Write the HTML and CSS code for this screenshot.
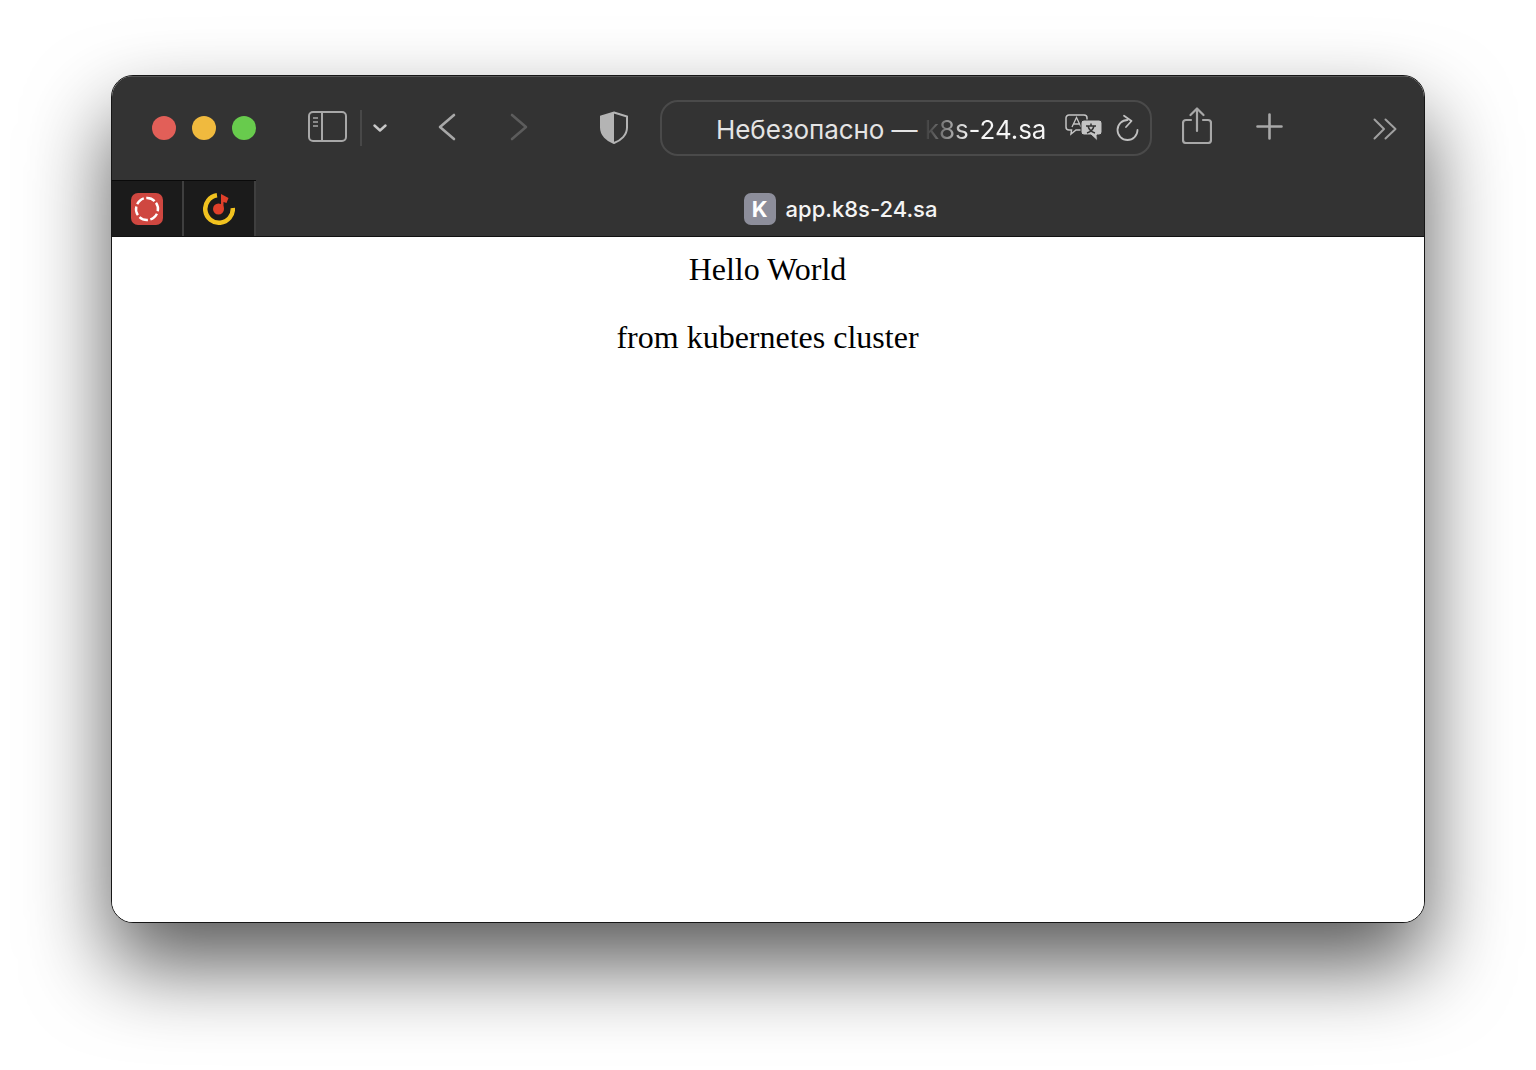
FILE: index.html
```html
<!DOCTYPE html>
<html lang="ru">
<head>
    <meta charset="UTF-8">
    <title>app.k8s-24.sa</title>
    <link rel="stylesheet" href="styles.css">
</head>
<body>
    <div class="window">
        <header class="toolbar">
            <div class="lights">
                <span class="light red"></span>
                <span class="light yellow"></span>
                <span class="light green"></span>
            </div>
            <svg class="ico sidebar" width="39" height="31" viewBox="0 0 39 31" fill="none" stroke="#a8a8a8" stroke-width="2">
                <rect x="1" y="1" width="37" height="29" rx="4"/>
                <path d="M14 1v29"/>
                <path d="M5 7h5M5 11h5M5 15h5" stroke-width="1.6"/>
            </svg>
            <span class="divider"></span>
            <svg class="ico chevron" width="14" height="8" viewBox="0 0 14 8" fill="none" stroke="#c8c8c8" stroke-width="2.4" stroke-linecap="round" stroke-linejoin="round">
                <path d="M1.5 1.5 7 6.5l5.500-5"/>
            </svg>
            <svg class="ico back" width="18" height="28" viewBox="0 0 18 28" fill="none" stroke="#a8a8a8" stroke-width="2.600" stroke-linecap="round" stroke-linejoin="round">
                <path d="M16 2 2 14l14 12"/>
            </svg>
            <svg class="ico forward" width="18" height="28" viewBox="0 0 18 28" fill="none" stroke="#5c5c5c" stroke-width="2.600" stroke-linecap="round" stroke-linejoin="round">
                <path d="M2 2l14 12L2 26"/>
            </svg>
            <svg class="ico shield" width="28" height="33" viewBox="0 0 28 33">
                <path d="M14 1.500 27 5.500v11C27 24 21 29.500 14 32 7 29.500 1 24 1 16.500v-11z" fill="none" stroke="#b4b4b4" stroke-width="2"/>
                <path d="M14 1.500 1 5.500v11C1 24 7 29.500 14 32z" fill="#b4b4b4"/>
            </svg>
            <div class="address">
                <span class="address-text">Небезопасно — <span class="host">k8s-24.sa</span></span>
                <svg class="ico translate" width="37" height="28" viewBox="0 0 37 28">
                    <path d="M4 1h15a3 3 0 0 1 3 3v9a3 3 0 0 1-3 3H11l-5 4 .5-4H4a3 3 0 0 1-3-3V4a3 3 0 0 1 3-3z" fill="none" stroke="#c4c4c4" stroke-width="1.500"/>
                    <path d="M7 13 11.500 3.500 16 13M8.500 10h6" fill="none" stroke="#c4c4c4" stroke-width="1.300"/>
                    <path d="M19 6h15a3 3 0 0 1 3 3v9a3 3 0 0 1-3 3h-2l.5 6-6.500-6h-7a3 3 0 0 1-3-3V9a3 3 0 0 1 3-3z" fill="#c4c4c4" stroke="#333" stroke-width="1"/>
                    <path d="M21 12h10M26 9.500V12M23 12c1 4 4 6 7 7M29 12c-1 4-4 6-7 7" fill="none" stroke="#333" stroke-width="1.500"/>
                </svg>
                <svg class="ico reload" width="23" height="28" viewBox="0 0 23 28" fill="none" stroke="#c0c0c0" stroke-width="1.800" stroke-linecap="round" stroke-linejoin="round">
                    <path d="M11.500 6A10 10 0 1 0 21.500 16"/>
                    <path d="M8 1.700l7.500 5.300L10 13"/>
                </svg>
            </div>
            <svg class="ico share" width="30" height="37" viewBox="0 0 30 37" fill="none" stroke="#a8a8a8" stroke-width="2.200" stroke-linecap="round" stroke-linejoin="round">
                <path d="M9 13H4a3 3 0 0 0-3 3v17a3 3 0 0 0 3 3h22a3 3 0 0 0 3-3V16a3 3 0 0 0-3-3h-5"/>
                <path d="M15 24V2M8.500 8 15 1.500 21.500 8"/>
            </svg>
            <svg class="ico plus" width="27" height="27" viewBox="0 0 27 27" fill="none" stroke="#a8a8a8" stroke-width="2.600" stroke-linecap="round">
                <path d="M13.500 1.500v24M1.500 13.500h24"/>
            </svg>
            <svg class="ico more" width="24" height="22" viewBox="0 0 24 22" fill="none" stroke="#a0a0a0" stroke-width="2" stroke-linecap="round" stroke-linejoin="round">
                <path d="M1.500 1.500 11 11l-9.500 9.500M12.500 1.500 22.500 11l-10 9.500"/>
            </svg>
        </header>
        <nav class="tabbar">
            <div class="pinned">
                <div class="pin">
                    <svg width="32" height="32" viewBox="0 0 32 32">
                        <rect width="32" height="32" rx="7" fill="#cf4740"/>
                        <circle cx="16" cy="16" r="11" fill="none" stroke="#fff" stroke-width="2.400" stroke-dasharray="9 2.500" transform="rotate(-35 16 16)"/>
                    </svg>
                </div>
                <div class="pin">
                    <svg width="32" height="32" viewBox="0 0 32 32">
                        <path d="M14 2.300A13.800 13.800 0 1 0 29.800 15" fill="none" stroke="#f1c21f" stroke-width="4.500"/>
                        <circle cx="15.500" cy="16" r="5.500" fill="#e0402a"/>
                        <path d="M18 16V1l7.500 4-2 5-3-1v7z" fill="#e0402a"/>
                    </svg>
                </div>
            </div>
            <div class="tab-title">
                <span class="favicon">K</span>
                <span>app.k8s-24.sa</span>
            </div>
        </nav>
        <main class="page">
            <p>Hello World</p>
            <p>from kubernetes cluster</p>
        </main>
    </div>
</body>
</html>
```

FILE: styles.css
```css
*{
    margin: 0;
    padding: 0;
    box-sizing: border-box;
}
body{
    width: 1536px;
    height: 1070px;
    padding: 75px 111px 147px;
    background-color: white;
    overflow: hidden;
    font-family: Inter, "Noto Sans", sans-serif;
}
.window{
    height: 848px;
    display: flex;
    flex-direction: column;
    border: 1px solid #161616;
    border-radius: 22px;
    overflow: hidden;
    background: white;
    box-shadow: 0 42px 84px rgba(0, 0, 0, .65);
}
.toolbar{
    height: 104px;
    display: flex;
    align-items: flex-start;
    background: #333333;
    border-top: 1px solid #555;
}
.ico{
    flex: none;
    display: block;
}
.lights{
    display: flex;
    gap: 16px;
    margin: 39px 0 0 40px;
}
.light{
    width: 24px;
    height: 24px;
    border-radius: 50%;
}
.red{ background: #e25f58; }
.yellow{ background: #f0ba3e; }
.green{ background: #68cb4d; }
.sidebar{ margin: 34px 0 0 52px; }
.divider{
    width: 2px;
    height: 36px;
    margin: 33px 0 0 13px;
    background: #484848;
}
.chevron{ margin: 47px 0 0 11px; }
.back{ margin: 36px 0 0 51px; }
.forward{ margin: 36px 0 0 54px; }
.shield{ margin: 34px 0 0 72px; }
.address{
    width: 492px;
    height: 56px;
    margin: 23px 0 0 32px;
    padding-left: 54px;
    display: flex;
    align-items: center;
    border: 2px solid #4a4a4a;
    border-radius: 18px;
    color: #e4e4e4;
    font-size: 26px;
}
.address-text{
    width: 349px;
    padding-top: 3px;
    letter-spacing: -.08px;
    white-space: nowrap;
}
.host{
    color: transparent;
    background: linear-gradient(90deg, #3d3d3d 0, #8a8a8a 22px, #f6f6f6 44px);
    -webkit-background-clip: text;
    background-clip: text;
}
.reload{ margin-left: 14px; }
.share{ margin: 30px 0 0 30px; }
.plus{ margin: 36px 0 0 44px; }
.more{ margin: 41px 0 0 90px; }
.tabbar{
    height: 57px;
    display: flex;
    background: #333333;
    border-bottom: 1px solid #111;
}
.pinned{
    display: flex;
    border-top: 1px solid #0a0a0a;
}
.pin{
    width: 72px;
    display: flex;
    align-items: center;
    justify-content: center;
    background: #1b1b1b;
    border-right: 2px solid #3f3f3f;
}
.tab-title{
    flex: 1;
    padding: 1px 0 0 1px;
    display: flex;
    align-items: center;
    justify-content: center;
    gap: 10px;
    color: #f4f4f4;
    font-size: 22px;
    font-weight: 500;
}
.favicon{
    width: 32px;
    height: 32px;
    display: flex;
    align-items: center;
    justify-content: center;
    border-radius: 7px;
    background: #8d8e9b;
    color: white;
    font-weight: 700;
    font-size: 22px;
}
.page{
    flex: 1;
    padding: 14px 1px 0 0;
    background: white;
    color: black;
    text-align: center;
    font-family: "Liberation Serif", serif;
    font-size: 32px;
    line-height: 36px;
}
.page p{
    margin-bottom: 32px;
}
```
